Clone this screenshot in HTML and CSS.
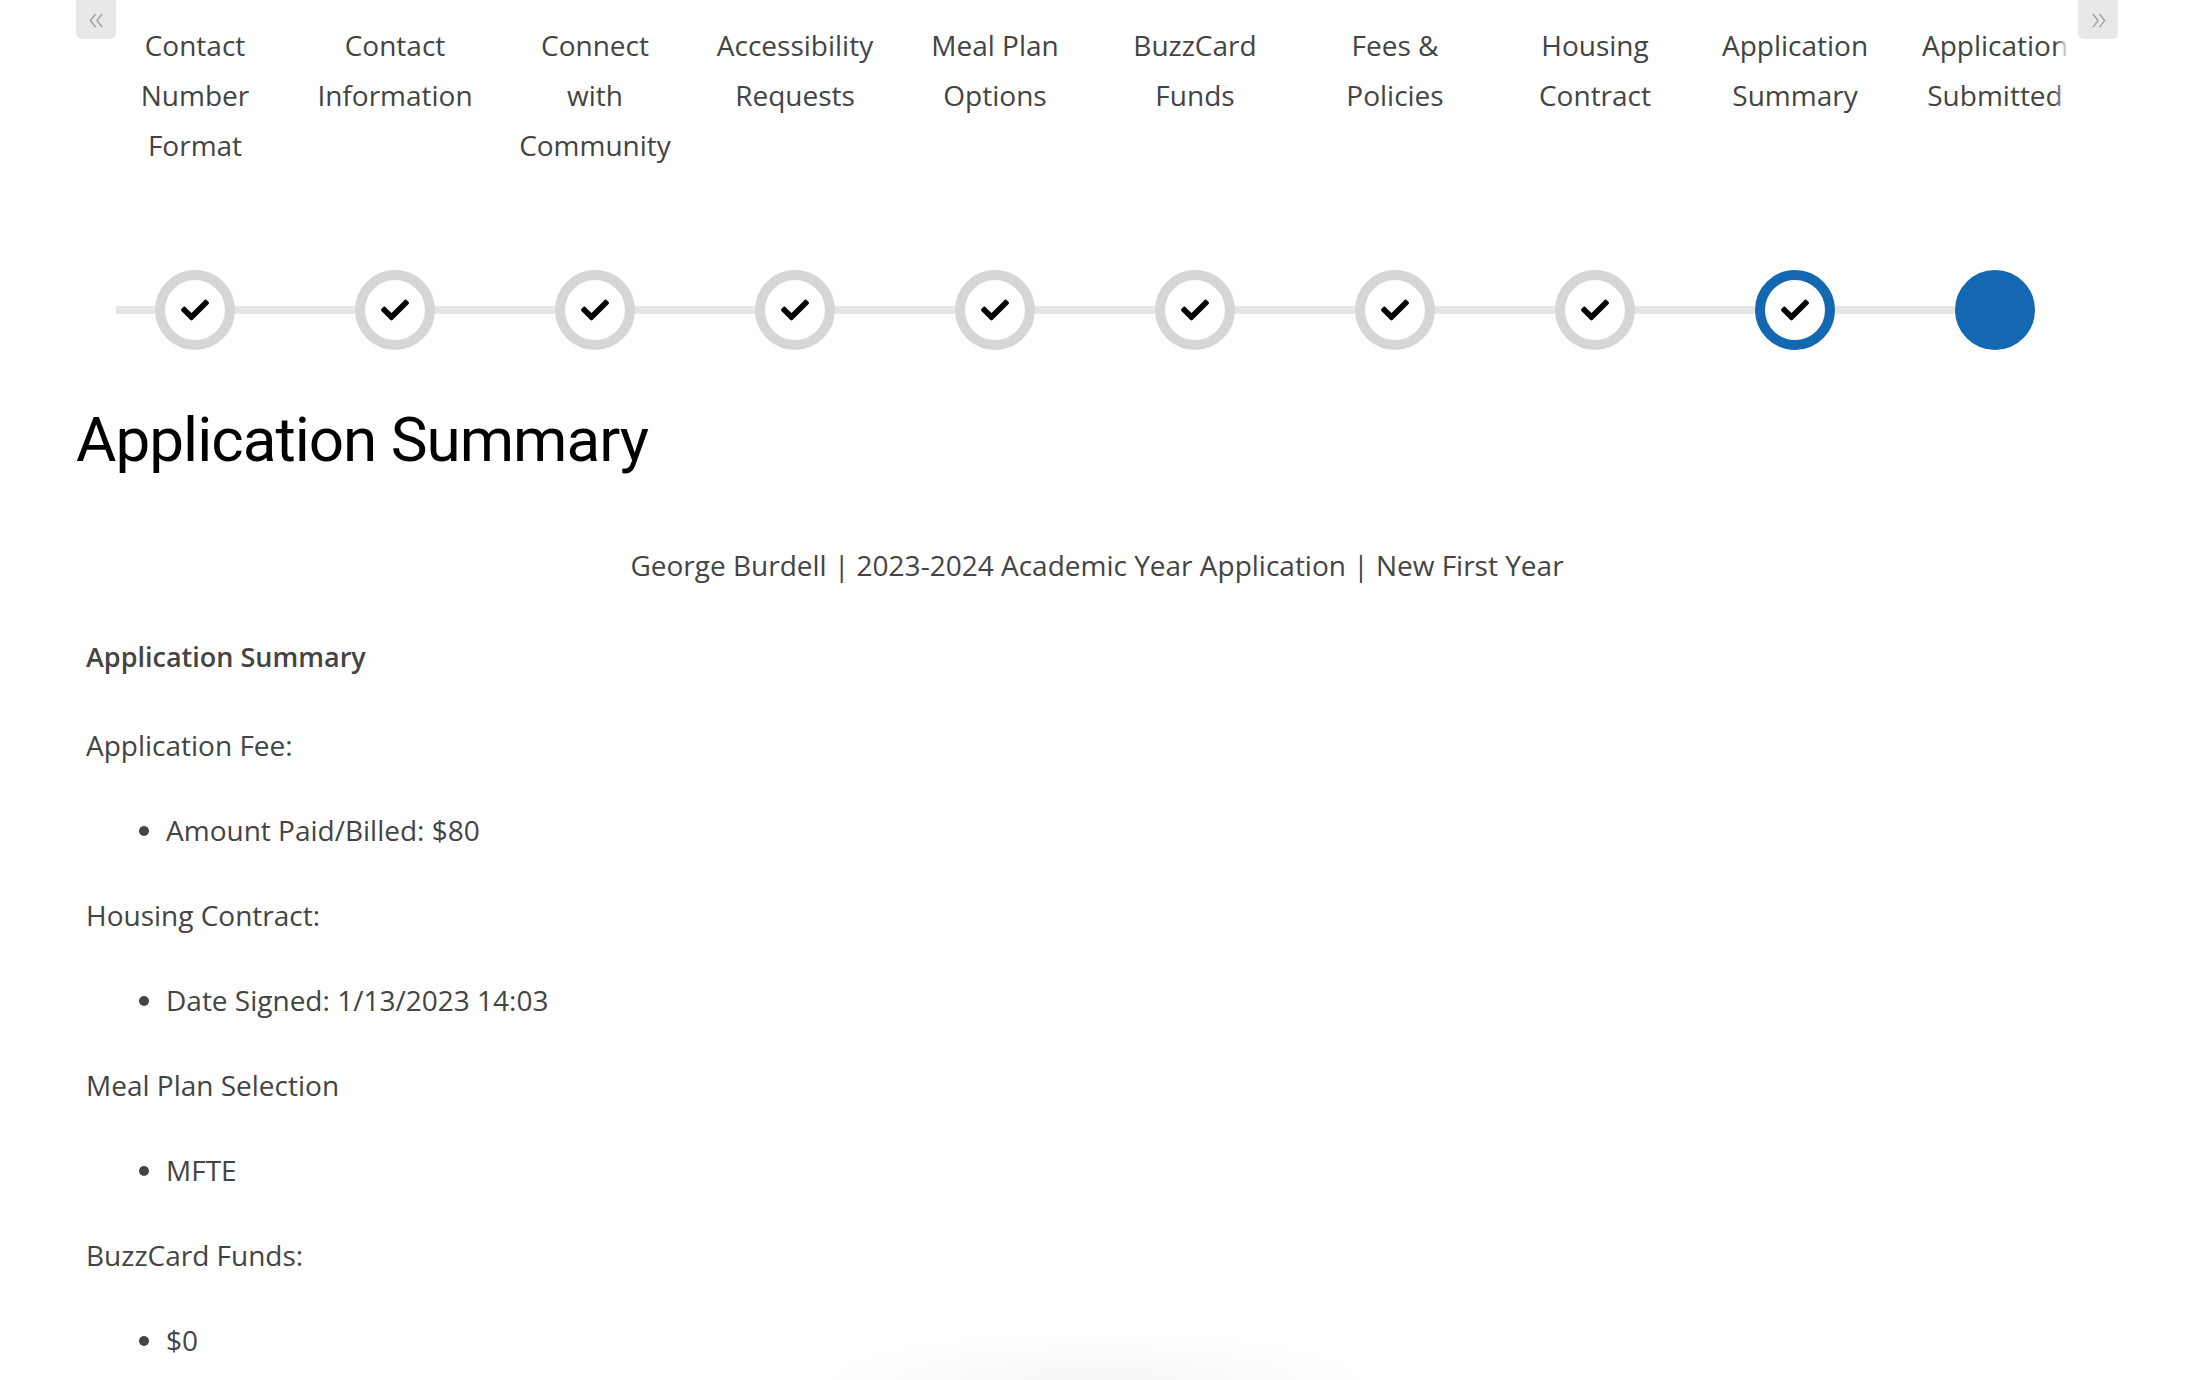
FILE: index.html
```html
<!DOCTYPE html>
<html lang="en">
<head>
  <meta charset="UTF-8" />
  <title>Application Summary</title>
  <link rel="stylesheet" href="styles.css">
</head>
<body>
  <div class="page">

    <!-- Progress steps -->
    <div class="steps-wrap">
      <button class="nav-btn prev" aria-label="Previous"><svg viewBox="0 0 16 18"><polyline points="7,2 1.5,9 7,16"/><polyline points="14,2 8.5,9 14,16"/></svg></button>
      <div class="steps-view">
        <div class="steps">
          <div class="step done"><div class="label">Contact Number Format</div><div class="dot"><svg viewBox="0 0 512 512"><path d="M173.9 439.4l-166.4-166.4c-10-10-10-26.2 0-36.2l36.2-36.2c10-10 26.2-10 36.2 0L192 312.7 432.1 72.6c10-10 26.2-10 36.2 0l36.2 36.2c10 10 10 26.2 0 36.2l-294.4 294.4c-10 10-26.2 10-36.2 0z"/></svg></div></div>
          <div class="step done"><div class="label">Contact Information</div><div class="dot"><svg viewBox="0 0 512 512"><path d="M173.9 439.4l-166.4-166.4c-10-10-10-26.2 0-36.2l36.2-36.2c10-10 26.2-10 36.2 0L192 312.7 432.1 72.6c10-10 26.2-10 36.2 0l36.2 36.2c10 10 10 26.2 0 36.2l-294.4 294.4c-10 10-26.2 10-36.2 0z"/></svg></div></div>
          <div class="step done"><div class="label">Connect with Community</div><div class="dot"><svg viewBox="0 0 512 512"><path d="M173.9 439.4l-166.4-166.4c-10-10-10-26.2 0-36.2l36.2-36.2c10-10 26.2-10 36.2 0L192 312.7 432.1 72.6c10-10 26.2-10 36.2 0l36.2 36.2c10 10 10 26.2 0 36.2l-294.4 294.4c-10 10-26.2 10-36.2 0z"/></svg></div></div>
          <div class="step done"><div class="label">Accessibility Requests</div><div class="dot"><svg viewBox="0 0 512 512"><path d="M173.9 439.4l-166.4-166.4c-10-10-10-26.2 0-36.2l36.2-36.2c10-10 26.2-10 36.2 0L192 312.7 432.1 72.6c10-10 26.2-10 36.2 0l36.2 36.2c10 10 10 26.2 0 36.2l-294.4 294.4c-10 10-26.2 10-36.2 0z"/></svg></div></div>
          <div class="step done"><div class="label">Meal Plan Options</div><div class="dot"><svg viewBox="0 0 512 512"><path d="M173.9 439.4l-166.4-166.4c-10-10-10-26.2 0-36.2l36.2-36.2c10-10 26.2-10 36.2 0L192 312.7 432.1 72.6c10-10 26.2-10 36.2 0l36.2 36.2c10 10 10 26.2 0 36.2l-294.4 294.4c-10 10-26.2 10-36.2 0z"/></svg></div></div>
          <div class="step done"><div class="label">BuzzCard Funds</div><div class="dot"><svg viewBox="0 0 512 512"><path d="M173.9 439.4l-166.4-166.4c-10-10-10-26.2 0-36.2l36.2-36.2c10-10 26.2-10 36.2 0L192 312.7 432.1 72.6c10-10 26.2-10 36.2 0l36.2 36.2c10 10 10 26.2 0 36.2l-294.4 294.4c-10 10-26.2 10-36.2 0z"/></svg></div></div>
          <div class="step done"><div class="label">Fees &amp; Policies</div><div class="dot"><svg viewBox="0 0 512 512"><path d="M173.9 439.4l-166.4-166.4c-10-10-10-26.2 0-36.2l36.2-36.2c10-10 26.2-10 36.2 0L192 312.7 432.1 72.6c10-10 26.2-10 36.2 0l36.2 36.2c10 10 10 26.2 0 36.2l-294.4 294.4c-10 10-26.2 10-36.2 0z"/></svg></div></div>
          <div class="step done"><div class="label">Housing Contract</div><div class="dot"><svg viewBox="0 0 512 512"><path d="M173.9 439.4l-166.4-166.4c-10-10-10-26.2 0-36.2l36.2-36.2c10-10 26.2-10 36.2 0L192 312.7 432.1 72.6c10-10 26.2-10 36.2 0l36.2 36.2c10 10 10 26.2 0 36.2l-294.4 294.4c-10 10-26.2 10-36.2 0z"/></svg></div></div>
          <div class="step current"><div class="label">Application Summary</div><div class="dot"><svg viewBox="0 0 512 512"><path d="M173.9 439.4l-166.4-166.4c-10-10-10-26.2 0-36.2l36.2-36.2c10-10 26.2-10 36.2 0L192 312.7 432.1 72.6c10-10 26.2-10 36.2 0l36.2 36.2c10 10 10 26.2 0 36.2l-294.4 294.4c-10 10-26.2 10-36.2 0z"/></svg></div></div>
          <div class="step next"><div class="label">Application Submitted</div><div class="dot"></div></div>
        </div>
      </div>
      <button class="nav-btn next-btn" aria-label="Next"><svg viewBox="0 0 16 18"><polyline points="2,2 7.5,9 2,16"/><polyline points="9,2 14.5,9 9,16"/></svg></button>
    </div>

    <h1 class="title">Application Summary</h1>

    <p class="subtitle">George Burdell | 2023-2024 Academic Year Application | New First Year</p>

    <!-- Summary -->
    <div class="summary">
      <p class="summary-head">Application Summary</p>

      <p>Application Fee:</p>
      <ul>
        <li>Amount Paid/Billed: $80</li>
      </ul>

      <p>Housing Contract:</p>
      <ul>
        <li>Date Signed: 1/13/2023 14:03</li>
      </ul>

      <p>Meal Plan Selection</p>
      <ul>
        <li>MFTE</li>
      </ul>

      <p>BuzzCard Funds:</p>
      <ul>
        <li>$0</li>
      </ul>
    </div>
  </div>

  <div class="bottom-glow"></div>
</body>
</html>
```

FILE: styles.css
```css
/* === GLOBAL === */
* {
  box-sizing: border-box;
  margin: 0;
  padding: 0;
}

body {
  font-family: 'Open Sans', sans-serif;
  color: #444;
  background: #fff;
  overflow: hidden;
}

.page {
  padding: 0 76px;
}

/* === STEPS === */
.steps-wrap {
  position: relative;
  padding: 0 49px 0 19px;
}

/* soft fade where the carousel is cut off */
.steps-wrap::after {
  content: "";
  position: absolute;
  top: 0;
  right: 49px;
  width: 14px;
  height: 180px;
  background: linear-gradient(to right, rgba(255,255,255,0), #fff);
}

.nav-btn {
  position: absolute;
  top: 0;
  width: 40px;
  height: 39px;
  border: none;
  border-radius: 0 0 6px 6px;
  background: #e8e8e8;
  display: flex;
  align-items: center;
  justify-content: center;
  padding-top: 2px;
  cursor: pointer;
  z-index: 2;
}

.nav-btn svg {
  width: 15px;
  height: 17px;
  fill: none;
  stroke: #9a9a9a;
  stroke-width: 1.4;
}

.nav-btn.prev {
  left: 0;
}

.nav-btn.next-btn {
  right: 0;
}

.steps-view {
  overflow: hidden;
}

.steps {
  position: relative;
  display: flex;
  width: 2000px;
}

.steps::before {
  content: "";
  position: absolute;
  left: 21px;
  right: 110px;
  top: 306px;
  height: 8px;
  background: #e6e6e6;
}

.step {
  width: 200px;
  flex: none;
  display: flex;
  flex-direction: column;
  align-items: center;
}

.label {
  width: 100%;
  height: 171px;
  padding: 20px 19px 0;
  text-align: center;
  font-size: 28px;
  line-height: 50px;
  color: #444;
}

.dot {
  position: relative;
  margin-top: 99px;
  width: 80px;
  height: 80px;
  border-radius: 50%;
  border: 10px solid #d6d6d6;
  background: #fff;
  display: flex;
  align-items: center;
  justify-content: center;
}

.dot svg {
  width: 28px;
  height: 28px;
  fill: #000;
}

.step.current .dot {
  border-color: #1468b1;
}

.step.next .dot {
  border-color: #1468b1;
  background: #1468b1;
}

/* === HEADINGS === */
.title {
  margin-top: 51px;
  font-family: 'Roboto', sans-serif;
  font-weight: 400;
  font-size: 62px;
  letter-spacing: -1px;
  line-height: 77px;
  color: #000;
}

.subtitle {
  margin-top: 68px;
  text-align: center;
  font-size: 28px;
  line-height: 39px;
}

/* === SUMMARY === */
.summary {
  margin-top: 52px;
  padding-left: 10px;
  font-size: 28px;
  line-height: 39px;
}

.summary p {
  margin-bottom: 46px;
}

.summary .summary-head {
  font-size: 27px;
  font-weight: 600;
  margin-bottom: 50px;
}

.summary ul {
  padding-left: 80px;
}

.summary li {
  margin-bottom: 46px;
}

.bottom-glow {
  position: fixed;
  bottom: 0;
  left: 50%;
  width: 560px;
  height: 50px;
  margin-left: -280px;
  background: radial-gradient(ellipse at 50% 100%, rgba(0,0,0,0.035), rgba(0,0,0,0) 70%);
}
```
